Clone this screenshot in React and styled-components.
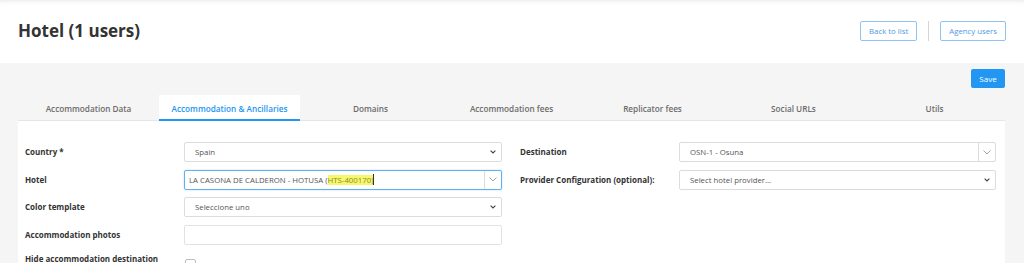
import React from 'react';
import styled, { createGlobalStyle } from 'styled-components';

const GlobalStyle = createGlobalStyle`
  html, body {
    margin: 0;
    padding: 0;
    background: #f5f5f5;
    font-family: "Open Sans", "Noto Sans", sans-serif;
  }
  * { box-sizing: border-box; }
`;

const Page = styled.div`
  width: 1024px;
  height: 263px;
  overflow: hidden;
  background: #f5f5f5;
`;

const Header = styled.header`
  height: 63px;
  padding: 0 18px 0 18px;
  display: flex;
  justify-content: space-between;
  align-items: center;
  background: #fff;
  box-shadow: inset 0 4px 4px -3px rgba(0, 0, 0, 0.1);
`;

const Title = styled.h1`
  margin: 0 0 2px;
  font-size: 17px;
  font-weight: 700;
  color: #333;
`;

const Actions = styled.div`
  display: flex;
  align-items: center;
  gap: 11px;
  margin-bottom: 1px;
`;

const OutlineButton = styled.button`
  height: 20px;
  padding: 0 8px;
  background: #fff;
  border: 1px solid #8cc4f4;
  border-radius: 2px;
  color: #4e9be0;
  font-family: inherit;
  font-size: 7.8px;
`;

const Divider = styled.span`
  width: 1px;
  height: 20px;
  background: #d5d5d5;
`;

const Main = styled.main`
  padding: 6px 19px 0 18px;
`;

const SaveRow = styled.div`
  display: flex;
  justify-content: flex-end;
`;

const SaveButton = styled.button`
  width: 34px;
  height: 19px;
  padding: 0;
  border: none;
  border-radius: 2px;
  background: #2196f3;
  color: #fff;
  font-family: inherit;
  font-size: 8px;
`;

const Tabs = styled.nav`
  margin-top: 7px;
  display: grid;
  grid-template-columns: repeat(7, 1fr);
  border-bottom: 1px solid #e3e6ea;
`;

const Tab = styled.div`
  height: 26px;
  display: flex;
  align-items: center;
  justify-content: center;
  font-size: 8.2px;
  font-weight: 600;
  color: ${p => (p.$active ? '#2196f3' : '#6b6b6b')};
  background: ${p => (p.$active ? '#fff' : 'transparent')};
  border-bottom: 2px solid ${p => (p.$active ? '#2196f3' : 'transparent')};
  padding-top: 2px;
  margin-bottom: -1px;
`;

const Panel = styled.section`
  background: #fff;
  padding: 21px 9px 0 7px;
  display: grid;
  grid-template-columns: 477px 476px;
  column-gap: 18px;
`;

const Column = styled.div`
  display: flex;
  flex-direction: column;
  gap: 7.7px;
`;

const Row = styled.div`
  display: grid;
  grid-template-columns: 159px 1fr;
  align-items: center;
  min-height: 20px;
`;

const Label = styled.label`
  font-size: 8px;
  font-weight: 700;
  color: #333;
  line-height: 12px;
  padding-right: 16px;
`;

const SelectBox = styled.div`
  height: 20px;
  display: flex;
  align-items: center;
  justify-content: space-between;
  padding: 0 5px 0 10px;
  border: 1px solid #dcdcdc;
  border-radius: 2px;
  font-size: 7.8px;
  color: #555;
  background: #fff;
`;

const Combo = styled.div`
  height: 20px;
  display: flex;
  border: 1px solid ${p => (p.$focus ? '#62aef0' : '#dcdcdc')};
  border-radius: 2px;
  background: #fff;
  box-shadow: ${p => (p.$focus ? '0 0 2px rgba(33,150,243,0.35)' : 'none')};
`;

const ComboText = styled.div`
  flex: 1;
  display: flex;
  align-items: center;
  padding-left: ${p => (p.$focus ? '4px' : '10px')};
  font-size: 7.8px;
  color: #555;
  white-space: nowrap;
`;

const ComboArrow = styled.div`
  width: 17px;
  display: flex;
  align-items: center;
  justify-content: center;
  border-left: 1px solid #dcdcdc;
`;

const Highlight = styled.mark`
  background: #f7f76a;
  color: #8a8a40;
`;

const Caret = styled.span`
  display: inline-block;
  width: 1px;
  height: 11px;
  background: #333;
`;

const TextInput = styled.div`
  height: 20px;
  border: 1px solid #e2e2e2;
  border-radius: 2px;
  background: #fff;
`;

const Checkbox = styled.span`
  display: block;
  width: 11px;
  height: 11px;
  margin-left: 1px;
  border: 1px solid #bdbdbd;
  border-radius: 2px;
`;

const SmallChevron = () => (
  <svg width="6" height="4" viewBox="0 0 6 4">
    <path d="M0.6 0.6 L3 3 L5.4 0.6" fill="none" stroke="#444" strokeWidth="1.1" />
  </svg>
);

const ThinChevron = () => (
  <svg width="8" height="5" viewBox="0 0 8 5">
    <path d="M0.5 0.5 L4 4 L7.5 0.5" fill="none" stroke="#999" strokeWidth="0.9" />
  </svg>
);

const tabs = [
  'Accommodation Data',
  'Accommodation & Ancillaries',
  'Domains',
  'Accommodation fees',
  'Replicator fees',
  'Social URLs',
  'Utils',
];

export default function App() {
  return (
    <Page>
      <GlobalStyle />
      <Header>
        <Title>Hotel (1 users)</Title>
        <Actions>
          <OutlineButton>Back to list</OutlineButton>
          <Divider />
          <OutlineButton>Agency users</OutlineButton>
        </Actions>
      </Header>
      <Main>
        <SaveRow>
          <SaveButton>Save</SaveButton>
        </SaveRow>
        <Tabs>
          {tabs.map((t, i) => (
            <Tab key={t} $active={i === 1}>{t}</Tab>
          ))}
        </Tabs>
        <Panel>
          <Column>
            <Row>
              <Label>Country *</Label>
              <SelectBox>Spain<SmallChevron /></SelectBox>
            </Row>
            <Row>
              <Label>Hotel</Label>
              <Combo $focus>
                <ComboText $focus>
                  LA CASONA DE CALDERON - HOTUSA (<Highlight>HTS-400170)</Highlight><Caret />
                </ComboText>
                <ComboArrow><ThinChevron /></ComboArrow>
              </Combo>
            </Row>
            <Row>
              <Label>Color template</Label>
              <SelectBox>Seleccione uno<SmallChevron /></SelectBox>
            </Row>
            <Row>
              <Label>Accommodation photos</Label>
              <TextInput />
            </Row>
            <Row>
              <Label>Hide accommodation destination name</Label>
              <Checkbox />
            </Row>
          </Column>
          <Column>
            <Row>
              <Label>Destination</Label>
              <Combo>
                <ComboText>OSN-1 - Osuna</ComboText>
                <ComboArrow><ThinChevron /></ComboArrow>
              </Combo>
            </Row>
            <Row>
              <Label>Provider Configuration (optional):</Label>
              <SelectBox>Select hotel provider...<SmallChevron /></SelectBox>
            </Row>
          </Column>
        </Panel>
      </Main>
    </Page>
  );
}
